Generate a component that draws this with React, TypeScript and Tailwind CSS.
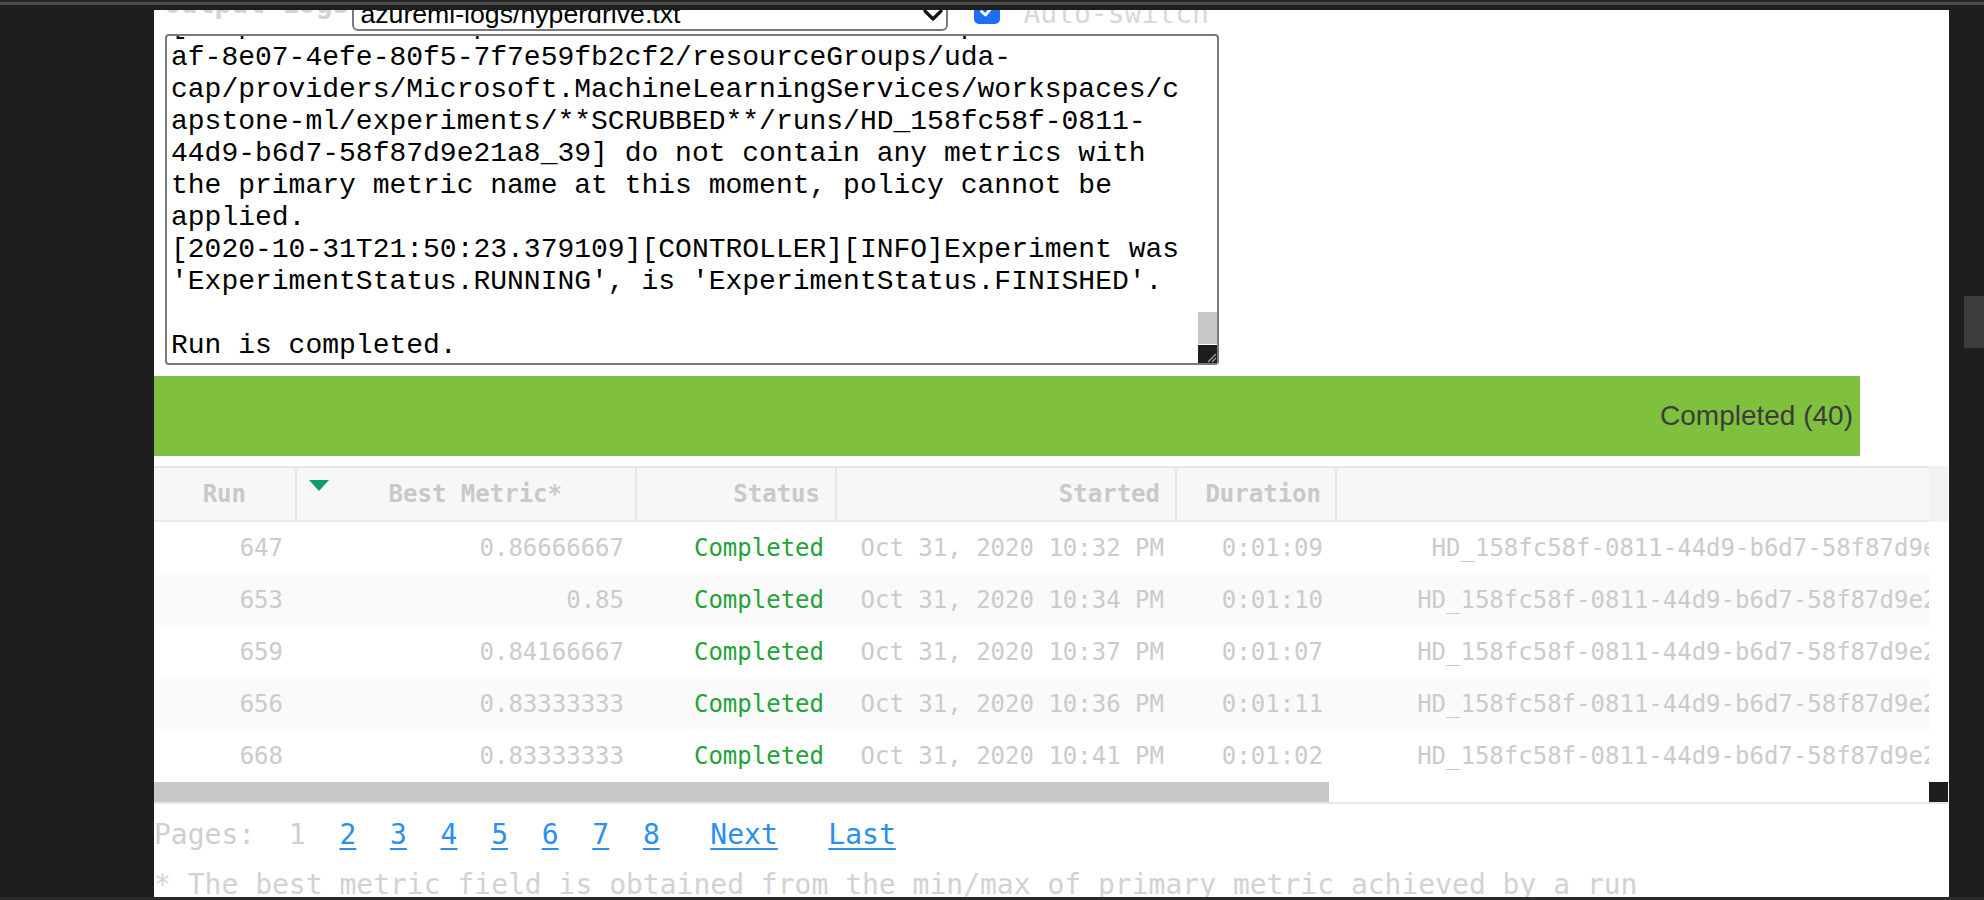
import React from "react";

const mono = "font-['DejaVu_Sans_Mono',monospace]";

const logLines = [
  "[https://eastus.experiments.azureml.net/subscriptions/6a5d9e",
  "af-8e07-4efe-80f5-7f7e59fb2cf2/resourceGroups/uda-",
  "cap/providers/Microsoft.MachineLearningServices/workspaces/c",
  "apstone-ml/experiments/**SCRUBBED**/runs/HD_158fc58f-0811-",
  "44d9-b6d7-58f87d9e21a8_39] do not contain any metrics with",
  "the primary metric name at this moment, policy cannot be",
  "applied.",
  "[2020-10-31T21:50:23.379109][CONTROLLER][INFO]Experiment was",
  "'ExperimentStatus.RUNNING', is 'ExperimentStatus.FINISHED'.",
  "",
  "Run is completed.",
];

const runs = [
  { run: "647", metric: "0.86666667", started: "Oct 31, 2020 10:32 PM", duration: "0:01:09", id: "HD_158fc58f-0811-44d9-b6d7-58f87d9e21a8_9" },
  { run: "653", metric: "0.85", started: "Oct 31, 2020 10:34 PM", duration: "0:01:10", id: "HD_158fc58f-0811-44d9-b6d7-58f87d9e21a8_15" },
  { run: "659", metric: "0.84166667", started: "Oct 31, 2020 10:37 PM", duration: "0:01:07", id: "HD_158fc58f-0811-44d9-b6d7-58f87d9e21a8_21" },
  { run: "656", metric: "0.83333333", started: "Oct 31, 2020 10:36 PM", duration: "0:01:11", id: "HD_158fc58f-0811-44d9-b6d7-58f87d9e21a8_18" },
  { run: "668", metric: "0.83333333", started: "Oct 31, 2020 10:41 PM", duration: "0:01:02", id: "HD_158fc58f-0811-44d9-b6d7-58f87d9e21a8_30" },
];

const cols = "grid grid-cols-[143px_340px_200px_340px_160px_701px] w-[1884px]";

function LogsHeader() {
  return (
    <div className="ml-[10px] mt-[-13px] flex h-[34px] shrink-0 items-start">
      <div className={`${mono} mt-[-7px] text-[28px] leading-[28px] font-bold text-[#d2d2d2] whitespace-pre`}>
        Output Logs
      </div>
      <div className="ml-[3px] flex h-[34px] w-[596px] items-start justify-between rounded-[6px] border-2 border-[#7a7a7a] bg-white pl-[6px]">
        <span className="font-['Liberation_Sans',Arial,sans-serif] text-[26.67px] leading-[30px] text-black">
          azuremi-logs/hyperdrive.txt
        </span>
        <svg className="mr-[3px] mt-[10px]" width="20" height="12" viewBox="0 0 20 12">
          <path d="M2 2 L10 10 L18 2" fill="none" stroke="#111" strokeWidth="3.2" strokeLinecap="round" strokeLinejoin="round" />
        </svg>
      </div>
      <div className="ml-[26px] mt-[1px] flex h-[26px] w-[26px] items-center justify-center rounded-[5px] bg-[#1c6ef2]">
        <svg width="18" height="18" viewBox="0 0 18 18">
          <path d="M3.5 9.5 L7.5 13 L14.5 4.5" fill="none" stroke="#fff" strokeWidth="2.8" strokeLinecap="round" strokeLinejoin="round" />
        </svg>
      </div>
      <div className={`${mono} ml-[23px] mt-[3px] text-[28px] leading-[28px] text-[#d8d8d8] whitespace-pre`}>
        Auto-switch
      </div>
    </div>
  );
}

function LogBox() {
  return (
    <div className="relative ml-[11px] mt-[3px] h-[331px] w-[1054px] shrink-0 rounded-[4px] border-2 border-[#7a7a7a] bg-white">
      <div className="h-full w-full overflow-hidden pl-[4px]">
        <div className="mt-[-26px] font-['Liberation_Mono','Courier_New',monospace] text-[28px] leading-[32px] text-black">
          {logLines.map((line, i) => (
            <div key={i} className="h-[32px] whitespace-pre">
              {line || "\u00a0"}
            </div>
          ))}
        </div>
      </div>
      <div className="absolute right-0 top-[276px] h-[32px] w-[19px] bg-[#c8c8c8]" />
      <div className="absolute bottom-0 right-0 flex h-[18px] w-[19px] items-end justify-end bg-[#1e1e1e]">
        <svg width="12" height="12" viewBox="0 0 12 12">
          <path d="M11 3 L3 11 M11 7 L7 11" stroke="#9a9a9a" strokeWidth="1.4" />
        </svg>
      </div>
    </div>
  );
}

function StatusBar() {
  return (
    <div className="mt-[11px] flex h-[80px] w-[1706px] shrink-0 items-center justify-end bg-[#7fc03e] pr-[7px]">
      <span className="font-['Liberation_Sans',Arial,sans-serif] text-[28px] text-[#3c3c3c]">Completed (40)</span>
    </div>
  );
}

function RunsTable() {
  return (
    <div className="mt-[10px] flex shrink-0 flex-col">
      <div className="flex">
        <div className="w-[1775px] overflow-hidden">
          <div className={`${cols} ${mono} h-[56px] border-y-2 border-[#e8e8e8] bg-[#f7f7f7] text-[24px] font-bold text-[#c9c9c9]`}>
            <div className="flex items-center justify-end border-r-2 border-[#e8e8e8] pr-[49px]">Run</div>
            <div className="flex items-center justify-between border-r-2 border-[#e8e8e8] pl-[12px] pr-[73px]">
              <svg className="mb-[18px]" width="20" height="11" viewBox="0 0 20 11">
                <path d="M0 0 L20 0 L10 11 Z" fill="#0f9b6e" />
              </svg>
              <span>Best Metric*</span>
            </div>
            <div className="flex items-center justify-end border-r-2 border-[#e8e8e8] pr-[15px]">Status</div>
            <div className="flex items-center justify-end border-r-2 border-[#e8e8e8] pr-[15px]">Started</div>
            <div className="flex items-center justify-end border-r-2 border-[#e8e8e8] pr-[14px]">Duration</div>
            <div />
          </div>
          {runs.map((r, i) => (
            <div
              key={r.run}
              className={`${cols} ${mono} h-[52px] items-center text-[24px] text-[#cbcbcb] whitespace-pre ${i % 2 === 1 ? "bg-[#fafafa]" : "bg-white"}`}
            >
              <div className="pr-[14px] text-right">{r.run}</div>
              <div className="pr-[13px] text-right">{r.metric}</div>
              <div className="pr-[13px] text-right text-[#25a23a]">Completed</div>
              <div className="pr-[13px] text-right">{r.started}</div>
              <div className="pr-[14px] text-right">{r.duration}</div>
              <div className="pr-[14px] text-right">{r.id}</div>
            </div>
          ))}
        </div>
        <div className="flex w-[19px] flex-col">
          <div className="h-[56px] bg-[#f2f2f2]" />
          <div className="flex-1 bg-white" />
        </div>
      </div>
      <div className="flex h-[20px]">
        <div className="w-[1775px] bg-white">
          <div className="h-full w-[1175px] bg-[#c8c8c8]" />
        </div>
        <div className="w-[19px] bg-[#1e1e1e]" />
      </div>
      <div className="h-[2px] w-[1794px] bg-[#e6e6e6]" />
    </div>
  );
}

function Pager() {
  const pages = ["2", "3", "4", "5", "6", "7", "8"];
  return (
    <div className={`${mono} mt-[14px] h-[34px] shrink-0 text-[28px] leading-[34px] text-[#cfcfcf] whitespace-pre`}>
      <span>Pages:  1</span>
      {pages.map((p) => (
        <span key={p}>
          {"  "}
          <span className="text-[#2b8ef0] underline decoration-2 underline-offset-[4px]">{p}</span>
        </span>
      ))}
      <span>{"   "}</span>
      <span className="text-[#2b8ef0] underline decoration-2 underline-offset-[4px]">Next</span>
      <span>{"   "}</span>
      <span className="text-[#2b8ef0] underline decoration-2 underline-offset-[4px]">Last</span>
    </div>
  );
}

export default function App() {
  return (
    <div className="flex h-[900px] w-[1984px] flex-col overflow-hidden bg-[#1e1e1e]">
      <div className="flex h-[10px] shrink-0 flex-col">
        <div className="h-[2px] bg-[#262626]" />
        <div className="h-[3px] bg-[#4d4d4d]" />
        <div className="h-[5px] bg-[#1e1e1e]" />
      </div>
      <div className="flex h-[887px] shrink-0">
        <div className="w-[154px] bg-[#1e1e1e]" />
        <div className="flex h-full w-[1795px] flex-col overflow-hidden bg-white">
          <LogsHeader />
          <LogBox />
          <StatusBar />
          <RunsTable />
          <Pager />
          <div className={`${mono} mt-[16px] shrink-0 text-[28px] leading-[34px] text-[#d2d2d2] whitespace-pre`}>
            * The best metric field is obtained from the min/max of primary metric achieved by a run
          </div>
        </div>
        <div className="w-[35px] bg-[#1e1e1e] pl-[15px] pt-[286px]">
          <div className="h-[52px] w-[20px] bg-[#3c3c3c]" />
        </div>
      </div>
      <div className="h-[3px] shrink-0 bg-[#2a2a2a]" />
    </div>
  );
}
